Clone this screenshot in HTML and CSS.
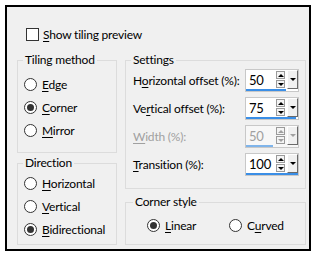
FILE: index.html
```html
<!DOCTYPE html>
<html lang="en">
<head>
    <meta charset="UTF-8">
    <title>Tiling</title>
    <link rel="stylesheet" href="styles.css">
</head>
<body>
    <div class="dialog">
        <label class="check-row">
            <span class="checkbox"></span>
            <span><u>S</u>how tiling preview</span>
        </label>
        <div class="columns">
            <div class="col-left">
                <fieldset class="group tiling">
                    <legend>Tiling method</legend>
                    <div class="radio"><span class="dot"></span><span><u>E</u>dge</span></div>
                    <div class="radio"><span class="dot on"></span><span><u>C</u>orner</span></div>
                    <div class="radio"><span class="dot"></span><span><u>M</u>irror</span></div>
                </fieldset>
                <fieldset class="group direction">
                    <legend>Direction</legend>
                    <div class="radio"><span class="dot"></span><span><u>H</u>orizontal</span></div>
                    <div class="radio"><span class="dot"></span><span><u>V</u>ertical</span></div>
                    <div class="radio"><span class="dot on"></span><span><u>B</u>idirectional</span></div>
                </fieldset>
            </div>
            <div class="col-right">
                <fieldset class="group settings">
                    <legend>Settings</legend>
                    <div class="row">
                        <span>H<u>o</u>rizontal offset (%):</span>
                        <div class="spin">
                            <div class="spin-top"><span class="val">50</span><span class="arrows"><i class="up"></i><i class="down"></i></span><span class="drop"></span></div>
                            <div class="bar" style="width: 40px"></div>
                        </div>
                    </div>
                    <div class="row">
                        <span>Ve<u>r</u>tical offset (%):</span>
                        <div class="spin">
                            <div class="spin-top"><span class="val">75</span><span class="arrows"><i class="up"></i><i class="down"></i></span><span class="drop"></span></div>
                            <div class="bar" style="width: 50px"></div>
                        </div>
                    </div>
                    <div class="row disabled">
                        <span><u>W</u>idth (%):</span>
                        <div class="spin">
                            <div class="spin-top"><span class="val">50</span><span class="arrows"><i class="up"></i><i class="down"></i></span><span class="drop"></span></div>
                            <div class="bar" style="width: 27px"></div>
                        </div>
                    </div>
                    <div class="row last">
                        <span><u>T</u>ransition (%):</span>
                        <div class="spin">
                            <div class="spin-top"><span class="val">100</span><span class="arrows"><i class="up"></i><i class="down"></i></span><span class="drop"></span></div>
                            <div class="bar" style="width: 52px"></div>
                        </div>
                    </div>
                </fieldset>
                <fieldset class="group corner">
                    <legend>Corner style</legend>
                    <div class="inline-radios">
                        <div class="radio"><span class="dot on"></span><span><u>L</u>inear</span></div>
                        <div class="radio"><span class="dot"></span><span>C<u>u</u>rved</span></div>
                    </div>
                </fieldset>
            </div>
        </div>
    </div>
</body>
</html>
```

FILE: styles.css
```css
* {
    box-sizing: border-box;
}
body {
    margin: 0;
    padding: 5px;
    background: #fff;
    font-family: Lato, "Noto Sans", sans-serif;
    font-size: 12px;
    letter-spacing: -0.2px;
    color: #000;
}
u {
    text-decoration-thickness: 1px;
    text-underline-offset: 2px;
}
.dialog {
    width: 306px;
    height: 246px;
    border: 2px solid #000;
    background: #f0f0f0;
    padding: 21px 3px 0 10px;
}
.check-row {
    display: flex;
    align-items: center;
    gap: 4px;
    margin-left: 9px;
    height: 13px;
}
.checkbox {
    width: 13px;
    height: 13px;
    border: 1px solid #333;
    background: #fff;
}
.columns {
    display: flex;
    gap: 8px;
    margin-top: 11px;
}
.col-left {
    width: 100px;
}
.col-right {
    width: 181px;
}
.group {
    margin: 0;
    border: 1px solid #dcdcdc;
    padding: 0;
}
.group legend {
    padding: 0 2px;
    margin-left: 5px;
    line-height: 16px;
}
.tiling {
    height: 101px;
    padding: 5px 0 0 6px;
}
.tiling legend,
.direction legend {
    margin-left: -1px;
}
.direction {
    margin-top: 2px;
    height: 90px;
    padding: 1px 0 0 6px;
}
.radio {
    display: flex;
    align-items: center;
    gap: 5px;
    height: 23px;
}
.dot {
    width: 13px;
    height: 13px;
    border: 1px solid #333;
    border-radius: 50%;
    background: #fff;
    display: flex;
    align-items: center;
    justify-content: center;
}
.dot.on::after {
    content: "";
    width: 7px;
    height: 7px;
    border-radius: 50%;
    background: #333;
}
.settings {
    height: 137px;
    padding: 1px 6px 0 7px;
}
.settings legend {
    margin-left: -2px;
}
.row {
    display: grid;
    grid-template-columns: 1fr 54px;
    align-items: center;
    height: 23px;
    margin-bottom: 5px;
    white-space: nowrap;
}
.row.last {
    margin-top: 3px;
}
.spin {
    height: 23px;
    background: #fff;
    border: 1px solid #c8c8c8;
    display: flex;
    flex-direction: column;
}
.spin-top {
    flex: 1;
    display: flex;
    align-items: center;
}
.val {
    flex: 1;
    padding-left: 3px;
    font-size: 13px;
}
.arrows {
    display: flex;
    flex-direction: column;
    gap: 1px;
    margin-right: 2px;
}
.arrows i {
    width: 9px;
    height: 8px;
    border: 1px solid #9a9a9a;
    background: #f4f4f4;
    display: flex;
    align-items: center;
    justify-content: center;
}
.arrows i::after {
    content: "";
    border-left: 3px solid transparent;
    border-right: 3px solid transparent;
}
.arrows .up::after {
    border-bottom: 3px solid #000;
}
.arrows .down::after {
    border-top: 3px solid #000;
}
.drop {
    width: 11px;
    height: 19px;
    align-self: flex-start;
    background: #f0f0f0;
    border-top: 1px solid #fff;
    border-left: 1px solid #fff;
    border-right: 1px solid #6a6a6a;
    border-bottom: 1px solid #6a6a6a;
    display: flex;
    align-items: center;
    justify-content: center;
}
.drop::after {
    content: "";
    border-left: 3px solid transparent;
    border-right: 3px solid transparent;
    border-top: 3px solid #000;
}
.bar {
    height: 3px;
    background: #3a8ee6;
}
.disabled {
    color: #a0a0a0;
}
.disabled .spin {
    background: #f7f7f7;
}
.disabled .arrows i::after,
.disabled .drop::after {
    border-top-color: #a0a0a0;
    border-bottom-color: #a0a0a0;
}
.disabled .bar {
    background: #7fb4ea;
}
.corner {
    margin-top: 5px;
    height: 51px;
    padding: 4px 0 0 21px;
}
.corner legend {
    margin-left: -14px;
}
.inline-radios {
    display: flex;
}
.inline-radios .radio:first-child {
    width: 82px;
}
```
